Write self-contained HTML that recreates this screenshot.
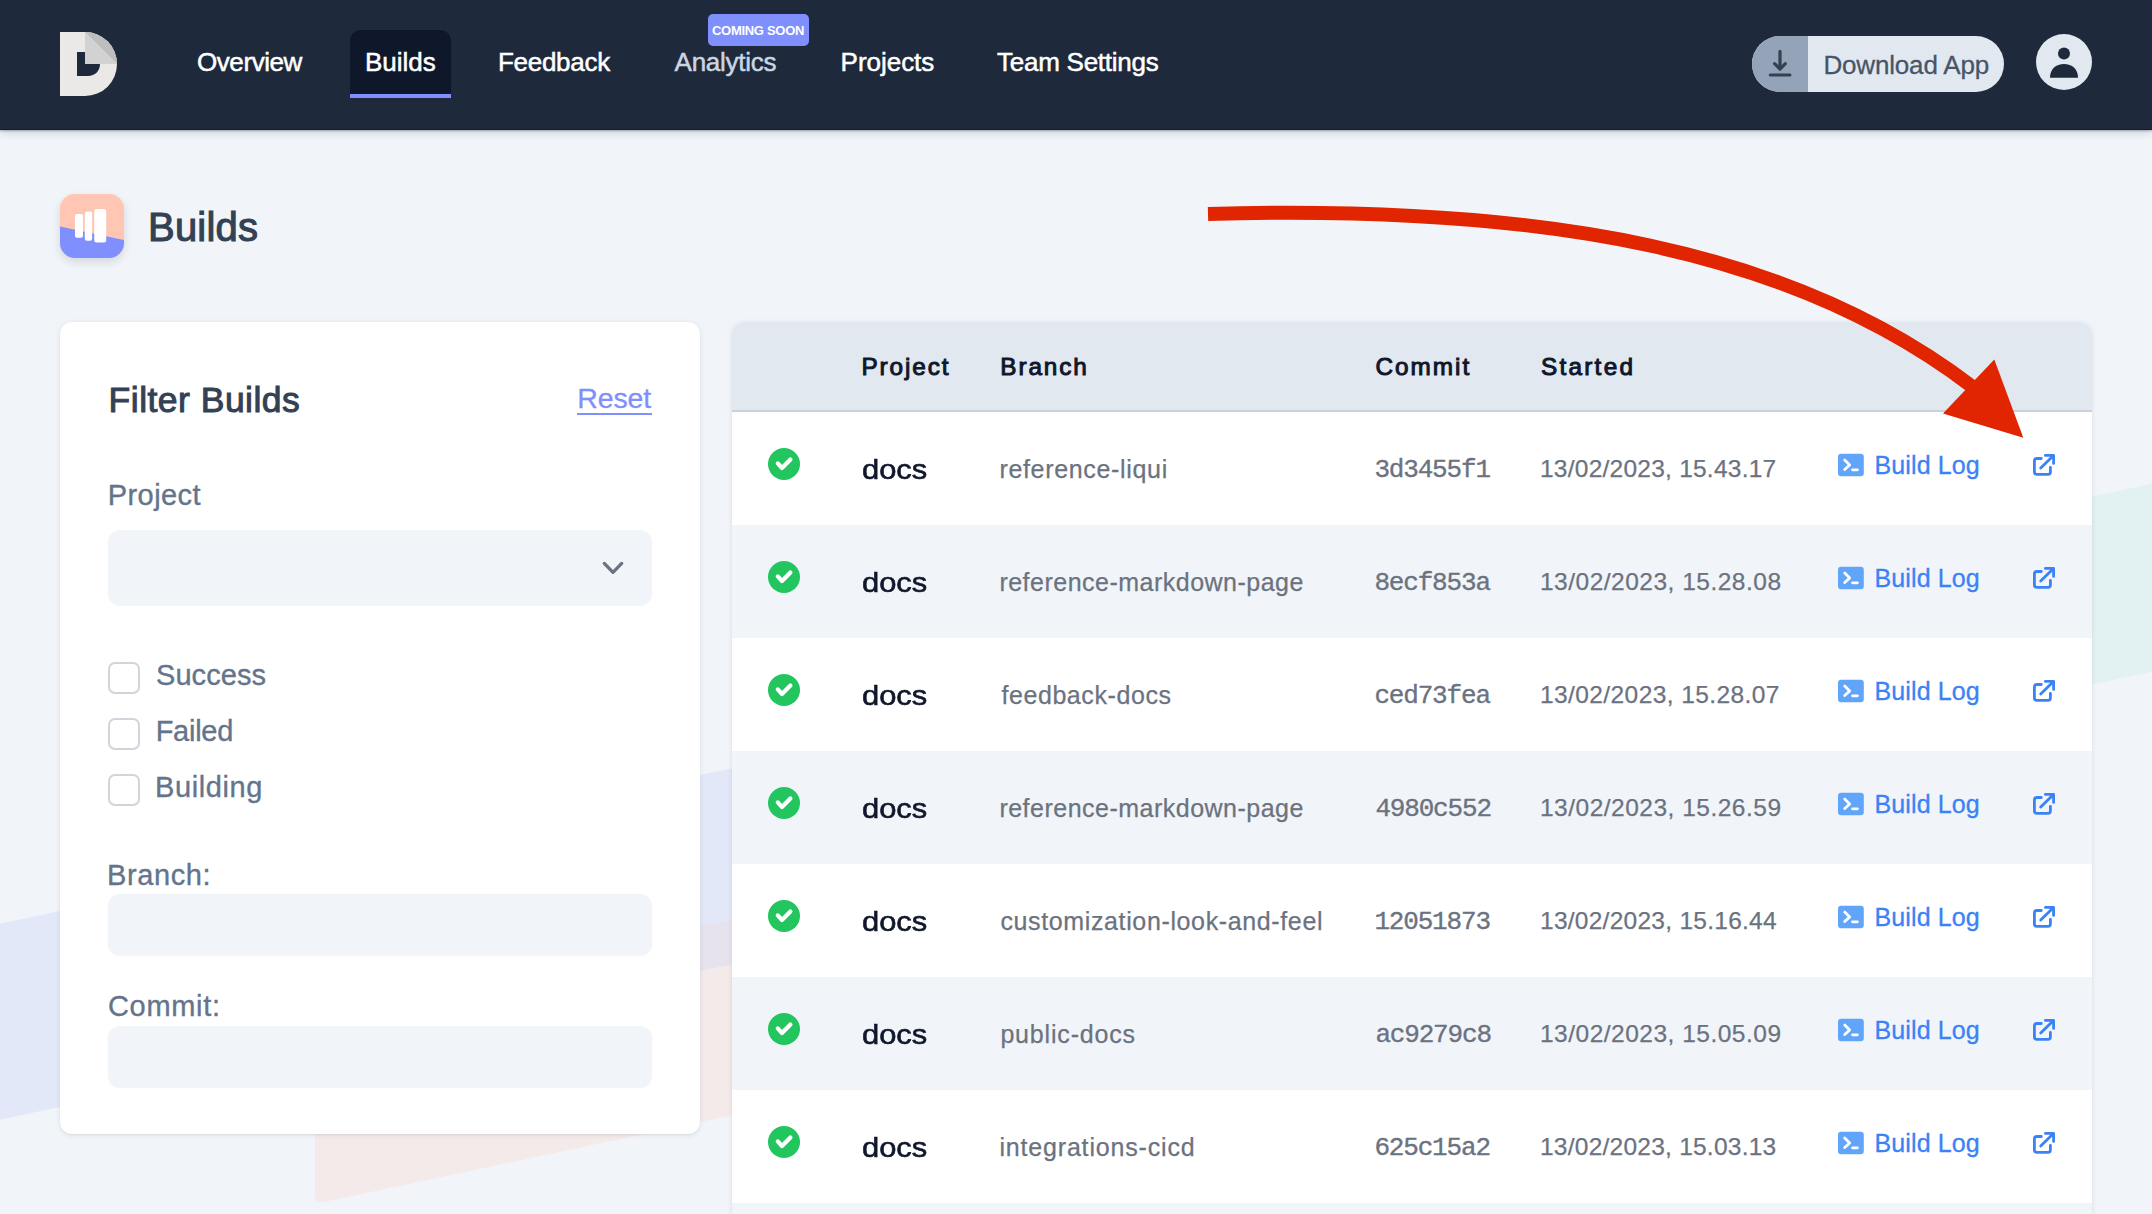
<!DOCTYPE html>
<html><head><meta charset="utf-8"><title>Builds</title>
<style>
html,body{margin:0;padding:0}
body{width:2152px;height:1214px;overflow:hidden;position:relative;background:#f1f5f9;font-family:"Liberation Sans",sans-serif}
.t{position:absolute;white-space:pre}
.abs{position:absolute}
</style></head><body>
<!-- background shapes -->
<svg class="abs" style="left:0;top:0" width="2152" height="1214">
  <polygon points="-20,928 1500,605 1500,801 -20,1124" fill="#e3e8f8"/>
  <path d="M315,1008 L1500,756 V952 L323,1202.3 Q315,1204 315,1196 Z" fill="#f5eaea"/>
  <polygon points="315,1008 1500,756 1500,801 315,1053" fill="#e7e3ee"/>
  <polygon points="1500,622 2160,482 2160,670 1500,810" fill="#e2f1f2"/>
</svg>
<!-- NAV -->
<div class="abs" style="left:0;top:0;width:2152px;height:129px;background:#1e293b;border-bottom:1px solid #141c2e;box-shadow:0 1px 2px rgba(15,23,42,0.30),0 3px 8px rgba(15,23,42,0.14)"></div>
<svg class="abs" style="left:0;top:0" width="140" height="129">
  <path d="M60,32 H85 A32,32 0 0 1 85,96 H60 Z" fill="#ebe8e8"/>
  <path d="M85,32 L117,64 H85 Z" fill="#d3d2d2"/>
  <path d="M85,32 A32,32 0 0 1 117,64 Z" fill="#bfbebe"/>
  <path d="M77,52 H85 V64 H100 C100,71 95,76 88,76 H77 Z" fill="#1e293b"/>
</svg>
<div class="abs" style="left:350px;top:30px;width:101px;height:64px;background:#0f172a;border-radius:11px 11px 0 0"></div>
<div class="abs" style="left:350px;top:94px;width:101px;height:4px;background:#7f8ffd"></div>
<div class="abs" style="left:708px;top:14px;width:101px;height:32px;background:#7f8ffd;border-radius:5px"></div>
<div class="abs" style="left:1752px;top:36px;width:252px;height:56px;background:#e2e8f0;border-radius:28px;overflow:hidden">
  <div class="abs" style="left:0;top:0;width:56px;height:56px;background:#94a3b8"></div>
</div>
<svg class="abs" style="left:1752px;top:36px" width="56" height="56">
  <path d="M28,15.4 V32.5" stroke="#334155" stroke-width="3.2" stroke-linecap="round" fill="none"/>
  <path d="M22.6,27.7 L28,33.1 L33.3,27.7" stroke="#334155" stroke-width="3.2" stroke-linecap="round" stroke-linejoin="round" fill="none"/>
  <path d="M18.3,39 H37.9" stroke="#334155" stroke-width="3.2" stroke-linecap="round" fill="none"/>
</svg>
<svg class="abs" style="left:2036px;top:34px" width="56" height="56">
  <circle cx="28" cy="28" r="28" fill="#e2e8f0"/>
  <circle cx="28" cy="19.6" r="6" fill="#1e293b"/>
  <path d="M14,43.7 C14,35 20,30 28,30 C36,30 42,35 42,43.7 Z" fill="#1e293b"/>
</svg>
<!-- TITLE ICON -->
<svg class="abs" style="left:50px;top:184px;overflow:visible" width="84" height="84">
  <defs>
    <clipPath id="ic"><rect x="10" y="10" width="64" height="64" rx="15"/></clipPath>
    <filter id="sh" x="-30%" y="-30%" width="160%" height="160%"><feDropShadow dx="0" dy="4" stdDeviation="4.5" flood-color="#0f172a" flood-opacity="0.13"/></filter>
  </defs>
  <rect x="10" y="10" width="64" height="64" rx="15" fill="#fec6b3" filter="url(#sh)"/>
  <g clip-path="url(#ic)">
    <rect x="10" y="10" width="64" height="64" fill="#fec6b3"/>
    <polygon points="10,42.5 74,56 74,74 10,74" fill="#7f8ffd"/>
  </g>
  <rect x="25" y="30" width="8" height="23.8" rx="2" fill="#fff"/>
  <rect x="34.8" y="27.5" width="7.3" height="29.3" rx="2" fill="#fff"/>
  <rect x="44.2" y="25" width="12" height="33.6" rx="2.5" fill="#fff"/>
</svg>
<!-- PANEL -->
<div class="abs" style="left:60px;top:322px;width:640px;height:812px;background:#fff;border-radius:12px;box-shadow:0 1px 6px rgba(15,23,42,0.08),0 1px 2px rgba(15,23,42,0.06)"></div>
<div class="abs" style="left:577px;top:413px;width:75px;height:2px;background:#7f8ffd"></div>
<div class="abs" style="left:108px;top:530px;width:544px;height:76px;background:#f1f5f9;border-radius:12px"></div>
<svg class="abs" style="left:596px;top:552px" width="34" height="30">
  <path d="M8.3,11.4 L17,20.3 L25.7,11.4" stroke="#6b7280" stroke-width="3.3" stroke-linecap="round" stroke-linejoin="round" fill="none"/>
</svg>
<div class="abs" style="left:108px;top:662px;width:28px;height:28px;border:2px solid #d1d5db;border-radius:7px;background:#fff"></div>
<div class="abs" style="left:108px;top:718px;width:28px;height:28px;border:2px solid #d1d5db;border-radius:7px;background:#fff"></div>
<div class="abs" style="left:108px;top:774px;width:28px;height:28px;border:2px solid #d1d5db;border-radius:7px;background:#fff"></div>
<div class="abs" style="left:108px;top:894px;width:544px;height:61px;background:#f1f5f9;border-radius:12px;box-shadow:0 1px 2px rgba(15,23,42,0.05)"></div>
<div class="abs" style="left:108px;top:1026px;width:544px;height:61px;background:#f1f5f9;border-radius:12px;box-shadow:0 1px 2px rgba(15,23,42,0.05)"></div>
<!-- TABLE -->
<div class="abs" style="left:732px;top:322px;width:1360px;height:920px;background:#fff;border-radius:12px 12px 0 0;box-shadow:0 1px 6px rgba(15,23,42,0.08),0 1px 2px rgba(15,23,42,0.06);overflow:hidden">
  <div class="abs" style="left:0;top:0;width:1360px;height:88px;background:#e2e8f0;border-bottom:2px solid #ccd1d9"></div>
  <div class="abs" style="left:0;top:90px;width:1360px;height:113px;background:#ffffff"></div>
  <div class="abs" style="left:0;top:203px;width:1360px;height:113px;background:#f1f5f9"></div>
  <div class="abs" style="left:0;top:316px;width:1360px;height:113px;background:#ffffff"></div>
  <div class="abs" style="left:0;top:429px;width:1360px;height:113px;background:#f1f5f9"></div>
  <div class="abs" style="left:0;top:542px;width:1360px;height:113px;background:#ffffff"></div>
  <div class="abs" style="left:0;top:655px;width:1360px;height:113px;background:#f1f5f9"></div>
  <div class="abs" style="left:0;top:768px;width:1360px;height:113px;background:#ffffff"></div>
  <div class="abs" style="left:0;top:881px;width:1360px;height:113px;background:#f1f5f9"></div>
</div>
<svg class="abs" style="left:0;top:0" width="2152" height="1214">
  <circle cx="784" cy="464" r="16" fill="#22c55e"/>
  <path d="M777.8,463.4 L782,468.0 L790.4,459.5" stroke="#fff" stroke-width="4.2" stroke-linecap="round" stroke-linejoin="round" fill="none"/>
  <rect x="1838" y="453.7" width="25.8" height="22.5" rx="3.2" fill="#60a5fa"/>
  <path d="M1844.7,460.1 L1849.7,464.9 L1844.7,469.6" stroke="#fff" stroke-width="2.8" stroke-linecap="round" stroke-linejoin="round" fill="none"/>
  <path d="M1852.5,469.8 H1857.4" stroke="#fff" stroke-width="2.8" stroke-linecap="round" fill="none"/>
  <path d="M2041.3,458.5 H2037 Q2034.4,458.5 2034.4,461.0 V472.0 Q2034.4,474.4 2037,474.4 H2048 Q2050.4,474.4 2050.4,472.0 V467.3" stroke="#3b82f6" stroke-width="2.8" stroke-linecap="round" stroke-linejoin="round" fill="none"/>
  <path d="M2045.4,455.4 H2053.6 V463.4 M2053,456.0 L2040.7,468.1" stroke="#3b82f6" stroke-width="2.8" stroke-linecap="round" stroke-linejoin="round" fill="none"/>
  <circle cx="784" cy="577" r="16" fill="#22c55e"/>
  <path d="M777.8,576.4 L782,581.0 L790.4,572.5" stroke="#fff" stroke-width="4.2" stroke-linecap="round" stroke-linejoin="round" fill="none"/>
  <rect x="1838" y="566.7" width="25.8" height="22.5" rx="3.2" fill="#60a5fa"/>
  <path d="M1844.7,573.1 L1849.7,577.9 L1844.7,582.6" stroke="#fff" stroke-width="2.8" stroke-linecap="round" stroke-linejoin="round" fill="none"/>
  <path d="M1852.5,582.8 H1857.4" stroke="#fff" stroke-width="2.8" stroke-linecap="round" fill="none"/>
  <path d="M2041.3,571.5 H2037 Q2034.4,571.5 2034.4,574.0 V585.0 Q2034.4,587.4 2037,587.4 H2048 Q2050.4,587.4 2050.4,585.0 V580.3" stroke="#3b82f6" stroke-width="2.8" stroke-linecap="round" stroke-linejoin="round" fill="none"/>
  <path d="M2045.4,568.4 H2053.6 V576.4 M2053,569.0 L2040.7,581.1" stroke="#3b82f6" stroke-width="2.8" stroke-linecap="round" stroke-linejoin="round" fill="none"/>
  <circle cx="784" cy="690" r="16" fill="#22c55e"/>
  <path d="M777.8,689.4 L782,694.0 L790.4,685.5" stroke="#fff" stroke-width="4.2" stroke-linecap="round" stroke-linejoin="round" fill="none"/>
  <rect x="1838" y="679.7" width="25.8" height="22.5" rx="3.2" fill="#60a5fa"/>
  <path d="M1844.7,686.1 L1849.7,690.9 L1844.7,695.6" stroke="#fff" stroke-width="2.8" stroke-linecap="round" stroke-linejoin="round" fill="none"/>
  <path d="M1852.5,695.8 H1857.4" stroke="#fff" stroke-width="2.8" stroke-linecap="round" fill="none"/>
  <path d="M2041.3,684.5 H2037 Q2034.4,684.5 2034.4,687.0 V698.0 Q2034.4,700.4 2037,700.4 H2048 Q2050.4,700.4 2050.4,698.0 V693.3" stroke="#3b82f6" stroke-width="2.8" stroke-linecap="round" stroke-linejoin="round" fill="none"/>
  <path d="M2045.4,681.4 H2053.6 V689.4 M2053,682.0 L2040.7,694.1" stroke="#3b82f6" stroke-width="2.8" stroke-linecap="round" stroke-linejoin="round" fill="none"/>
  <circle cx="784" cy="803" r="16" fill="#22c55e"/>
  <path d="M777.8,802.4 L782,807.0 L790.4,798.5" stroke="#fff" stroke-width="4.2" stroke-linecap="round" stroke-linejoin="round" fill="none"/>
  <rect x="1838" y="792.7" width="25.8" height="22.5" rx="3.2" fill="#60a5fa"/>
  <path d="M1844.7,799.1 L1849.7,803.9 L1844.7,808.6" stroke="#fff" stroke-width="2.8" stroke-linecap="round" stroke-linejoin="round" fill="none"/>
  <path d="M1852.5,808.8 H1857.4" stroke="#fff" stroke-width="2.8" stroke-linecap="round" fill="none"/>
  <path d="M2041.3,797.5 H2037 Q2034.4,797.5 2034.4,800.0 V811.0 Q2034.4,813.4 2037,813.4 H2048 Q2050.4,813.4 2050.4,811.0 V806.3" stroke="#3b82f6" stroke-width="2.8" stroke-linecap="round" stroke-linejoin="round" fill="none"/>
  <path d="M2045.4,794.4 H2053.6 V802.4 M2053,795.0 L2040.7,807.1" stroke="#3b82f6" stroke-width="2.8" stroke-linecap="round" stroke-linejoin="round" fill="none"/>
  <circle cx="784" cy="916" r="16" fill="#22c55e"/>
  <path d="M777.8,915.4 L782,920.0 L790.4,911.5" stroke="#fff" stroke-width="4.2" stroke-linecap="round" stroke-linejoin="round" fill="none"/>
  <rect x="1838" y="905.7" width="25.8" height="22.5" rx="3.2" fill="#60a5fa"/>
  <path d="M1844.7,912.1 L1849.7,916.9 L1844.7,921.6" stroke="#fff" stroke-width="2.8" stroke-linecap="round" stroke-linejoin="round" fill="none"/>
  <path d="M1852.5,921.8 H1857.4" stroke="#fff" stroke-width="2.8" stroke-linecap="round" fill="none"/>
  <path d="M2041.3,910.5 H2037 Q2034.4,910.5 2034.4,913.0 V924.0 Q2034.4,926.4 2037,926.4 H2048 Q2050.4,926.4 2050.4,924.0 V919.3" stroke="#3b82f6" stroke-width="2.8" stroke-linecap="round" stroke-linejoin="round" fill="none"/>
  <path d="M2045.4,907.4 H2053.6 V915.4 M2053,908.0 L2040.7,920.1" stroke="#3b82f6" stroke-width="2.8" stroke-linecap="round" stroke-linejoin="round" fill="none"/>
  <circle cx="784" cy="1029" r="16" fill="#22c55e"/>
  <path d="M777.8,1028.4 L782,1033.0 L790.4,1024.5" stroke="#fff" stroke-width="4.2" stroke-linecap="round" stroke-linejoin="round" fill="none"/>
  <rect x="1838" y="1018.7" width="25.8" height="22.5" rx="3.2" fill="#60a5fa"/>
  <path d="M1844.7,1025.1 L1849.7,1029.9 L1844.7,1034.6" stroke="#fff" stroke-width="2.8" stroke-linecap="round" stroke-linejoin="round" fill="none"/>
  <path d="M1852.5,1034.8 H1857.4" stroke="#fff" stroke-width="2.8" stroke-linecap="round" fill="none"/>
  <path d="M2041.3,1023.5 H2037 Q2034.4,1023.5 2034.4,1026.0 V1037.0 Q2034.4,1039.4 2037,1039.4 H2048 Q2050.4,1039.4 2050.4,1037.0 V1032.3" stroke="#3b82f6" stroke-width="2.8" stroke-linecap="round" stroke-linejoin="round" fill="none"/>
  <path d="M2045.4,1020.4 H2053.6 V1028.4 M2053,1021.0 L2040.7,1033.1" stroke="#3b82f6" stroke-width="2.8" stroke-linecap="round" stroke-linejoin="round" fill="none"/>
  <circle cx="784" cy="1142" r="16" fill="#22c55e"/>
  <path d="M777.8,1141.4 L782,1146.0 L790.4,1137.5" stroke="#fff" stroke-width="4.2" stroke-linecap="round" stroke-linejoin="round" fill="none"/>
  <rect x="1838" y="1131.7" width="25.8" height="22.5" rx="3.2" fill="#60a5fa"/>
  <path d="M1844.7,1138.1 L1849.7,1142.9 L1844.7,1147.6" stroke="#fff" stroke-width="2.8" stroke-linecap="round" stroke-linejoin="round" fill="none"/>
  <path d="M1852.5,1147.8 H1857.4" stroke="#fff" stroke-width="2.8" stroke-linecap="round" fill="none"/>
  <path d="M2041.3,1136.5 H2037 Q2034.4,1136.5 2034.4,1139.0 V1150.0 Q2034.4,1152.4 2037,1152.4 H2048 Q2050.4,1152.4 2050.4,1150.0 V1145.3" stroke="#3b82f6" stroke-width="2.8" stroke-linecap="round" stroke-linejoin="round" fill="none"/>
  <path d="M2045.4,1133.4 H2053.6 V1141.4 M2053,1134.0 L2040.7,1146.1" stroke="#3b82f6" stroke-width="2.8" stroke-linecap="round" stroke-linejoin="round" fill="none"/>
</svg>
<div class="t" style="left:197.00px;top:44.99px;font-size:26px;line-height:34px;letter-spacing:-0.429px;color:#ffffff;font-weight:400;font-family:'Liberation Sans',sans-serif;-webkit-text-stroke:0.5px #ffffff;">Overview</div>
<div class="t" style="left:365.00px;top:44.99px;font-size:26px;line-height:34px;letter-spacing:0.0px;color:#ffffff;font-weight:400;font-family:'Liberation Sans',sans-serif;-webkit-text-stroke:0.5px #ffffff;">Builds</div>
<div class="t" style="left:498.00px;top:44.99px;font-size:26px;line-height:34px;letter-spacing:-0.285px;color:#ffffff;font-weight:400;font-family:'Liberation Sans',sans-serif;-webkit-text-stroke:0.5px #ffffff;">Feedback</div>
<div class="t" style="left:674.60px;top:44.99px;font-size:26px;line-height:34px;letter-spacing:-0.275px;color:#cbd5e1;font-weight:400;font-family:'Liberation Sans',sans-serif;-webkit-text-stroke:0.5px #cbd5e1;">Analytics</div>
<div class="t" style="left:840.60px;top:44.99px;font-size:26px;line-height:34px;letter-spacing:-0.029px;color:#ffffff;font-weight:400;font-family:'Liberation Sans',sans-serif;-webkit-text-stroke:0.5px #ffffff;">Projects</div>
<div class="t" style="left:997.00px;top:44.99px;font-size:26px;line-height:34px;letter-spacing:-0.25px;color:#ffffff;font-weight:400;font-family:'Liberation Sans',sans-serif;-webkit-text-stroke:0.5px #ffffff;">Team Settings</div>
<div class="t" style="left:712.00px;top:21.99px;font-size:13px;line-height:17px;letter-spacing:-0.3px;color:#ffffff;font-weight:700;font-family:'Liberation Sans',sans-serif;">COMING SOON</div>
<div class="t" style="left:1823.50px;top:48.19px;font-size:26px;line-height:34px;letter-spacing:-0.182px;color:#475569;font-weight:400;font-family:'Liberation Sans',sans-serif;-webkit-text-stroke:0.3px #475569;">Download App</div>
<div class="t" style="left:148.00px;top:201.43px;font-size:40px;line-height:52px;letter-spacing:0.2px;color:#334155;font-weight:400;font-family:'Liberation Sans',sans-serif;-webkit-text-stroke:1.1px #334155;">Builds</div>
<div class="t" style="left:108.60px;top:376.69px;font-size:35.5px;line-height:46px;letter-spacing:0.484px;color:#334155;font-weight:400;font-family:'Liberation Sans',sans-serif;-webkit-text-stroke:1.0px #334155;">Filter Builds</div>
<div class="t" style="left:577.30px;top:380.32px;font-size:28.5px;line-height:37px;letter-spacing:-0.15px;color:#7f8ffd;font-weight:400;font-family:'Liberation Sans',sans-serif;-webkit-text-stroke:0.3px #7f8ffd;">Reset</div>
<div class="t" style="left:107.80px;top:476.15px;font-size:29px;line-height:38px;letter-spacing:0.4px;color:#64748b;font-weight:400;font-family:'Liberation Sans',sans-serif;-webkit-text-stroke:0.35px #64748b;">Project</div>
<div class="t" style="left:156.00px;top:655.75px;font-size:29px;line-height:38px;letter-spacing:0.066px;color:#64748b;font-weight:400;font-family:'Liberation Sans',sans-serif;-webkit-text-stroke:0.35px #64748b;">Success</div>
<div class="t" style="left:155.70px;top:712.25px;font-size:29px;line-height:38px;letter-spacing:-0.28px;color:#64748b;font-weight:400;font-family:'Liberation Sans',sans-serif;-webkit-text-stroke:0.35px #64748b;">Failed</div>
<div class="t" style="left:155.00px;top:767.65px;font-size:29px;line-height:38px;letter-spacing:0.6px;color:#64748b;font-weight:400;font-family:'Liberation Sans',sans-serif;-webkit-text-stroke:0.35px #64748b;">Building</div>
<div class="t" style="left:107.00px;top:855.95px;font-size:29px;line-height:38px;letter-spacing:0.6px;color:#64748b;font-weight:400;font-family:'Liberation Sans',sans-serif;-webkit-text-stroke:0.35px #64748b;">Branch:</div>
<div class="t" style="left:108.00px;top:987.35px;font-size:29px;line-height:38px;letter-spacing:0.666px;color:#64748b;font-weight:400;font-family:'Liberation Sans',sans-serif;-webkit-text-stroke:0.35px #64748b;">Commit:</div>
<div class="t" style="left:861.50px;top:350.98px;font-size:24.3px;line-height:32px;letter-spacing:1.9px;color:#0f172a;font-weight:400;font-family:'Liberation Sans',sans-serif;-webkit-text-stroke:1.0px #0f172a;">Project</div>
<div class="t" style="left:1000.30px;top:350.98px;font-size:24.3px;line-height:32px;letter-spacing:1.92px;color:#0f172a;font-weight:400;font-family:'Liberation Sans',sans-serif;-webkit-text-stroke:1.0px #0f172a;">Branch</div>
<div class="t" style="left:1375.40px;top:350.78px;font-size:24.3px;line-height:32px;letter-spacing:2.04px;color:#0f172a;font-weight:400;font-family:'Liberation Sans',sans-serif;-webkit-text-stroke:1.0px #0f172a;">Commit</div>
<div class="t" style="left:1541.00px;top:350.78px;font-size:24.3px;line-height:32px;letter-spacing:2.266px;color:#0f172a;font-weight:400;font-family:'Liberation Sans',sans-serif;-webkit-text-stroke:1.0px #0f172a;">Started</div>
<div class="t" style="left:861.50px;top:451.79px;font-size:28px;line-height:36px;letter-spacing:0px;color:#0f172a;font-weight:400;font-family:'Liberation Sans',sans-serif;-webkit-text-stroke:0.6px #0f172a;transform:scaleX(1.1035);transform-origin:0 0;">docs</div>
<div class="t" style="left:999.40px;top:453.13px;font-size:25px;line-height:32px;letter-spacing:0.671px;color:#6b7280;font-weight:400;font-family:'Liberation Sans',sans-serif;-webkit-text-stroke:0.25px #6b7280;">reference-liqui</div>
<div class="t" style="left:1374.40px;top:452.87px;font-size:26px;line-height:34px;letter-spacing:-1.172px;color:#6b7280;font-weight:400;font-family:'Liberation Mono',monospace;-webkit-text-stroke:0.35px #6b7280;">3d3455f1</div>
<div class="t" style="left:1540.00px;top:453.11px;font-size:24.5px;line-height:32px;letter-spacing:0.242px;color:#6b7280;font-weight:400;font-family:'Liberation Sans',sans-serif;-webkit-text-stroke:0.25px #6b7280;">13/02/2023, 15.43.17</div>
<div class="t" style="left:1874.60px;top:449.33px;font-size:25px;line-height:32px;letter-spacing:0.101px;color:#3b82f6;font-weight:400;font-family:'Liberation Sans',sans-serif;-webkit-text-stroke:0.3px #3b82f6;">Build Log</div>
<div class="t" style="left:861.50px;top:564.79px;font-size:28px;line-height:36px;letter-spacing:0px;color:#0f172a;font-weight:400;font-family:'Liberation Sans',sans-serif;-webkit-text-stroke:0.6px #0f172a;transform:scaleX(1.1035);transform-origin:0 0;">docs</div>
<div class="t" style="left:999.40px;top:566.13px;font-size:25px;line-height:32px;letter-spacing:0.491px;color:#6b7280;font-weight:400;font-family:'Liberation Sans',sans-serif;-webkit-text-stroke:0.25px #6b7280;">reference-markdown-page</div>
<div class="t" style="left:1374.40px;top:565.87px;font-size:26px;line-height:34px;letter-spacing:-1.172px;color:#6b7280;font-weight:400;font-family:'Liberation Mono',monospace;-webkit-text-stroke:0.35px #6b7280;">8ecf853a</div>
<div class="t" style="left:1540.00px;top:566.11px;font-size:24.5px;line-height:32px;letter-spacing:0.495px;color:#6b7280;font-weight:400;font-family:'Liberation Sans',sans-serif;-webkit-text-stroke:0.25px #6b7280;">13/02/2023, 15.28.08</div>
<div class="t" style="left:1874.60px;top:562.33px;font-size:25px;line-height:32px;letter-spacing:0.101px;color:#3b82f6;font-weight:400;font-family:'Liberation Sans',sans-serif;-webkit-text-stroke:0.3px #3b82f6;">Build Log</div>
<div class="t" style="left:861.50px;top:677.79px;font-size:28px;line-height:36px;letter-spacing:0px;color:#0f172a;font-weight:400;font-family:'Liberation Sans',sans-serif;-webkit-text-stroke:0.6px #0f172a;transform:scaleX(1.1035);transform-origin:0 0;">docs</div>
<div class="t" style="left:1001.40px;top:679.13px;font-size:25px;line-height:32px;letter-spacing:0.584px;color:#6b7280;font-weight:400;font-family:'Liberation Sans',sans-serif;-webkit-text-stroke:0.25px #6b7280;">feedback-docs</div>
<div class="t" style="left:1374.40px;top:678.87px;font-size:26px;line-height:34px;letter-spacing:-1.172px;color:#6b7280;font-weight:400;font-family:'Liberation Mono',monospace;-webkit-text-stroke:0.35px #6b7280;">ced73fea</div>
<div class="t" style="left:1540.00px;top:679.11px;font-size:24.5px;line-height:32px;letter-spacing:0.41px;color:#6b7280;font-weight:400;font-family:'Liberation Sans',sans-serif;-webkit-text-stroke:0.25px #6b7280;">13/02/2023, 15.28.07</div>
<div class="t" style="left:1874.60px;top:675.33px;font-size:25px;line-height:32px;letter-spacing:0.101px;color:#3b82f6;font-weight:400;font-family:'Liberation Sans',sans-serif;-webkit-text-stroke:0.3px #3b82f6;">Build Log</div>
<div class="t" style="left:861.50px;top:790.79px;font-size:28px;line-height:36px;letter-spacing:0px;color:#0f172a;font-weight:400;font-family:'Liberation Sans',sans-serif;-webkit-text-stroke:0.6px #0f172a;transform:scaleX(1.1035);transform-origin:0 0;">docs</div>
<div class="t" style="left:999.40px;top:792.13px;font-size:25px;line-height:32px;letter-spacing:0.491px;color:#6b7280;font-weight:400;font-family:'Liberation Sans',sans-serif;-webkit-text-stroke:0.25px #6b7280;">reference-markdown-page</div>
<div class="t" style="left:1375.40px;top:791.87px;font-size:26px;line-height:34px;letter-spacing:-1.172px;color:#6b7280;font-weight:400;font-family:'Liberation Mono',monospace;-webkit-text-stroke:0.35px #6b7280;">4980c552</div>
<div class="t" style="left:1540.00px;top:792.11px;font-size:24.5px;line-height:32px;letter-spacing:0.495px;color:#6b7280;font-weight:400;font-family:'Liberation Sans',sans-serif;-webkit-text-stroke:0.25px #6b7280;">13/02/2023, 15.26.59</div>
<div class="t" style="left:1874.60px;top:788.33px;font-size:25px;line-height:32px;letter-spacing:0.101px;color:#3b82f6;font-weight:400;font-family:'Liberation Sans',sans-serif;-webkit-text-stroke:0.3px #3b82f6;">Build Log</div>
<div class="t" style="left:861.50px;top:903.79px;font-size:28px;line-height:36px;letter-spacing:0px;color:#0f172a;font-weight:400;font-family:'Liberation Sans',sans-serif;-webkit-text-stroke:0.6px #0f172a;transform:scaleX(1.1035);transform-origin:0 0;">docs</div>
<div class="t" style="left:1000.40px;top:905.13px;font-size:25px;line-height:32px;letter-spacing:0.63px;color:#6b7280;font-weight:400;font-family:'Liberation Sans',sans-serif;-webkit-text-stroke:0.25px #6b7280;">customization-look-and-feel</div>
<div class="t" style="left:1374.40px;top:904.87px;font-size:26px;line-height:34px;letter-spacing:-1.172px;color:#6b7280;font-weight:400;font-family:'Liberation Mono',monospace;-webkit-text-stroke:0.35px #6b7280;">12051873</div>
<div class="t" style="left:1540.00px;top:905.11px;font-size:24.5px;line-height:32px;letter-spacing:0.263px;color:#6b7280;font-weight:400;font-family:'Liberation Sans',sans-serif;-webkit-text-stroke:0.25px #6b7280;">13/02/2023, 15.16.44</div>
<div class="t" style="left:1874.60px;top:901.33px;font-size:25px;line-height:32px;letter-spacing:0.101px;color:#3b82f6;font-weight:400;font-family:'Liberation Sans',sans-serif;-webkit-text-stroke:0.3px #3b82f6;">Build Log</div>
<div class="t" style="left:861.50px;top:1016.79px;font-size:28px;line-height:36px;letter-spacing:0px;color:#0f172a;font-weight:400;font-family:'Liberation Sans',sans-serif;-webkit-text-stroke:0.6px #0f172a;transform:scaleX(1.1035);transform-origin:0 0;">docs</div>
<div class="t" style="left:1000.40px;top:1018.13px;font-size:25px;line-height:32px;letter-spacing:0.82px;color:#6b7280;font-weight:400;font-family:'Liberation Sans',sans-serif;-webkit-text-stroke:0.25px #6b7280;">public-docs</div>
<div class="t" style="left:1375.40px;top:1017.87px;font-size:26px;line-height:34px;letter-spacing:-1.172px;color:#6b7280;font-weight:400;font-family:'Liberation Mono',monospace;-webkit-text-stroke:0.35px #6b7280;">ac9279c8</div>
<div class="t" style="left:1540.00px;top:1018.11px;font-size:24.5px;line-height:32px;letter-spacing:0.495px;color:#6b7280;font-weight:400;font-family:'Liberation Sans',sans-serif;-webkit-text-stroke:0.25px #6b7280;">13/02/2023, 15.05.09</div>
<div class="t" style="left:1874.60px;top:1014.33px;font-size:25px;line-height:32px;letter-spacing:0.101px;color:#3b82f6;font-weight:400;font-family:'Liberation Sans',sans-serif;-webkit-text-stroke:0.3px #3b82f6;">Build Log</div>
<div class="t" style="left:861.50px;top:1129.79px;font-size:28px;line-height:36px;letter-spacing:0px;color:#0f172a;font-weight:400;font-family:'Liberation Sans',sans-serif;-webkit-text-stroke:0.6px #0f172a;transform:scaleX(1.1035);transform-origin:0 0;">docs</div>
<div class="t" style="left:999.40px;top:1131.13px;font-size:25px;line-height:32px;letter-spacing:0.826px;color:#6b7280;font-weight:400;font-family:'Liberation Sans',sans-serif;-webkit-text-stroke:0.25px #6b7280;">integrations-cicd</div>
<div class="t" style="left:1374.40px;top:1130.87px;font-size:26px;line-height:34px;letter-spacing:-1.172px;color:#6b7280;font-weight:400;font-family:'Liberation Mono',monospace;-webkit-text-stroke:0.35px #6b7280;">625c15a2</div>
<div class="t" style="left:1540.00px;top:1131.11px;font-size:24.5px;line-height:32px;letter-spacing:0.242px;color:#6b7280;font-weight:400;font-family:'Liberation Sans',sans-serif;-webkit-text-stroke:0.25px #6b7280;">13/02/2023, 15.03.13</div>
<div class="t" style="left:1874.60px;top:1127.33px;font-size:25px;line-height:32px;letter-spacing:0.101px;color:#3b82f6;font-weight:400;font-family:'Liberation Sans',sans-serif;-webkit-text-stroke:0.3px #3b82f6;">Build Log</div>
<!-- ARROW -->
<svg class="abs" style="left:0;top:0" width="2152" height="1214">
  <path d="M1208,213.9 C1546.2,204.4 1793.3,250.1 1972,386.5" stroke="#e12500" stroke-width="14" fill="none"/>
  <polygon points="1943,413.5 1994.3,359.4 2023.3,437.7" fill="#e12500"/>
</svg>
</body></html>
